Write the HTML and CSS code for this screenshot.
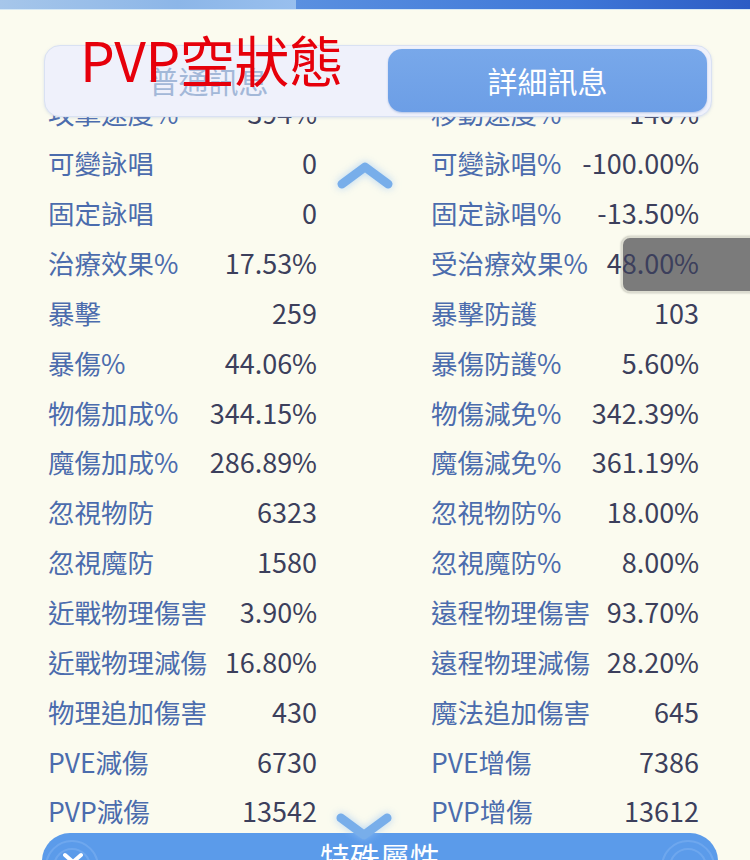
FILE: index.html
```html
<!DOCTYPE html>
<html lang="zh-Hant">
<head>
<meta charset="utf-8">
<title>詳細訊息</title>
<link rel="stylesheet" href="styles.css">
</head>
<body>
<div class="topband"><div class="band-left"></div><div class="band-right"></div></div>
<div class="page">
  <div class="tabs">
    <div class="tab">普通訊息</div>
    <div class="tab active">詳細訊息</div>
  </div>
  <div class="overlay-title">PVP空狀態</div>
  <div class="gray-box"></div>
  <div class="stats">
    <div class="cell"><span class="lbl">攻擊速度%</span><span class="val">394%</span></div>
    <div class="cell"><span class="lbl">移動速度%</span><span class="val">140%</span></div>
    <div class="cell"><span class="lbl">可變詠唱</span><span class="val">0</span></div>
    <div class="cell"><span class="lbl">可變詠唱%</span><span class="val">-100.00%</span></div>
    <div class="cell"><span class="lbl">固定詠唱</span><span class="val">0</span></div>
    <div class="cell"><span class="lbl">固定詠唱%</span><span class="val">-13.50%</span></div>
    <div class="cell"><span class="lbl">治療效果%</span><span class="val">17.53%</span></div>
    <div class="cell"><span class="lbl">受治療效果%</span><span class="val">48.00%</span></div>
    <div class="cell"><span class="lbl">暴擊</span><span class="val">259</span></div>
    <div class="cell"><span class="lbl">暴擊防護</span><span class="val">103</span></div>
    <div class="cell"><span class="lbl">暴傷%</span><span class="val">44.06%</span></div>
    <div class="cell"><span class="lbl">暴傷防護%</span><span class="val">5.60%</span></div>
    <div class="cell"><span class="lbl">物傷加成%</span><span class="val">344.15%</span></div>
    <div class="cell"><span class="lbl">物傷減免%</span><span class="val">342.39%</span></div>
    <div class="cell"><span class="lbl">魔傷加成%</span><span class="val">286.89%</span></div>
    <div class="cell"><span class="lbl">魔傷減免%</span><span class="val">361.19%</span></div>
    <div class="cell"><span class="lbl">忽視物防</span><span class="val">6323</span></div>
    <div class="cell"><span class="lbl">忽視物防%</span><span class="val">18.00%</span></div>
    <div class="cell"><span class="lbl">忽視魔防</span><span class="val">1580</span></div>
    <div class="cell"><span class="lbl">忽視魔防%</span><span class="val">8.00%</span></div>
    <div class="cell"><span class="lbl">近戰物理傷害</span><span class="val">3.90%</span></div>
    <div class="cell"><span class="lbl">遠程物理傷害</span><span class="val">93.70%</span></div>
    <div class="cell"><span class="lbl">近戰物理減傷</span><span class="val">16.80%</span></div>
    <div class="cell"><span class="lbl">遠程物理減傷</span><span class="val">28.20%</span></div>
    <div class="cell"><span class="lbl">物理追加傷害</span><span class="val">430</span></div>
    <div class="cell"><span class="lbl">魔法追加傷害</span><span class="val">645</span></div>
    <div class="cell"><span class="lbl">PVE減傷</span><span class="val">6730</span></div>
    <div class="cell"><span class="lbl">PVE增傷</span><span class="val">7386</span></div>
    <div class="cell"><span class="lbl">PVP減傷</span><span class="val">13542</span></div>
    <div class="cell"><span class="lbl">PVP增傷</span><span class="val">13612</span></div>
  </div>
  <svg class="chev chev-up" width="56" height="27" viewBox="0 0 56 27"><path d="M5 22 L28 5 L51 22" fill="none" stroke="#78aeea" stroke-width="9" stroke-linecap="round" stroke-linejoin="round"/></svg>
  <svg class="chev chev-down" width="56" height="27" viewBox="0 0 56 27"><path d="M5 5 L28 22 L51 5" fill="none" stroke="#78aeea" stroke-width="9" stroke-linecap="round" stroke-linejoin="round"/></svg>
  <div class="bottombar">
    <svg class="ring ring-left" width="60" height="60" viewBox="0 0 60 60"><circle cx="30" cy="30" r="26" fill="none" stroke="#7cb0f0" stroke-width="2"/><circle cx="30" cy="30" r="18" fill="none" stroke="#7cb0f0" stroke-width="2"/></svg>
    <svg class="ring-chev" width="22" height="14" viewBox="0 0 22 14"><path d="M3 3 L11 10 L19 3" fill="none" stroke="#ffffff" stroke-width="4" stroke-linecap="round"/></svg>
    <span class="bar-title">特殊屬性</span>
    <svg class="ring ring-right" width="60" height="60" viewBox="0 0 60 60"><circle cx="30" cy="30" r="26" fill="none" stroke="#7cb0f0" stroke-width="2"/><circle cx="30" cy="30" r="18" fill="none" stroke="#7cb0f0" stroke-width="2"/></svg>
  </div>
</div>
</body>
</html>
```
FILE: styles.css
```css
html, body {
  margin: 0;
  padding: 0;
  width: 750px;
  height: 860px;
  overflow: hidden;
  background: #fbfbef;
  font-family: "Noto Sans CJK TC", "Noto Sans", sans-serif;
}
.topband {
  display: flex;
  height: 9px;
  border-bottom: 1px solid #d6e8f4;
}
.band-left {
  width: 296px;
  background: linear-gradient(90deg, #a6c6ea, #8cb6e8 60%, #98bfee);
}
.band-right {
  flex: 1;
  background: linear-gradient(90deg, #5a90e0, #3f78d8 60%, #2c5cc4);
}
.page {
  position: relative;
  height: 815px;
  padding-top: 35px;
}
.tabs {
  position: relative;
  z-index: 3;
  margin: 0 38px 0 44px;
  height: 63px;
  padding: 3px 4px 4px 4px;
  display: flex;
  gap: 20px;
  background: #eff1fb;
  border: 1px solid #d9e1f3;
  border-radius: 16px;
  box-shadow: 0 1px 3px rgba(160, 180, 220, 0.35);
}
.tab {
  flex: 1;
  display: flex;
  align-items: center;
  justify-content: center;
  font-size: 30px;
  color: #a3b8d8;
  border-radius: 14px;
  padding-bottom: 2px;
}
.tab.active {
  background: linear-gradient(180deg, #78a8ea, #6c9ee6);
  color: #ffffff;
  box-shadow: 0 1px 2px rgba(90, 130, 200, 0.4);
}
.overlay-title {
  position: absolute;
  z-index: 4;
  left: 80px;
  top: 21px;
  font-size: 55px;
  line-height: 1;
  color: #e6000b;
  letter-spacing: -0.5px;
}
.gray-box {
  position: absolute;
  z-index: 1;
  left: 621px;
  top: 226px;
  width: 140px;
  height: 53px;
  background: #7b7b7b;
  border: 2px solid #dcdcd0;
  border-radius: 9px;
  box-shadow: 0 0 2px rgba(0, 0, 0, 0.3);
}
.stats {
  position: relative;
  z-index: 2;
  margin-top: -29px;
  padding-left: 48px;
  display: grid;
  grid-template-columns: 269px 268px;
  column-gap: 114px;
  grid-auto-rows: 49.86px;
}
.cell {
  display: flex;
  justify-content: space-between;
  align-items: center;
  font-size: 26.5px;
  white-space: nowrap;
}
.lbl {
  color: #4b6cad;
}
.val {
  color: #3c3f5c;
  font-size: 27px;
}
.chev {
  position: absolute;
  z-index: 5;
  filter: drop-shadow(0 0 4px rgba(150, 195, 245, 0.7));
}
.chev-up {
  left: 337px;
  top: 152px;
}
.chev-down {
  left: 336px;
  top: 803px;
}
.bottombar {
  position: relative;
  z-index: 4;
  margin: -3px 32px 0 42px;
  height: 60px;
  background: #5b9bea;
  border-radius: 28px 28px 0 0;
  overflow: hidden;
  display: flex;
  justify-content: center;
}
.bar-title {
  color: #ffffff;
  font-size: 30px;
  line-height: 36px;
  padding-top: 5px;
}
.ring {
  position: absolute;
  top: 4px;
  opacity: 0.6;
}
.ring-left {
  left: 0;
}
.ring-right {
  right: 0;
}
.ring-chev {
  position: absolute;
  left: 20px;
  top: 19px;
}
```
